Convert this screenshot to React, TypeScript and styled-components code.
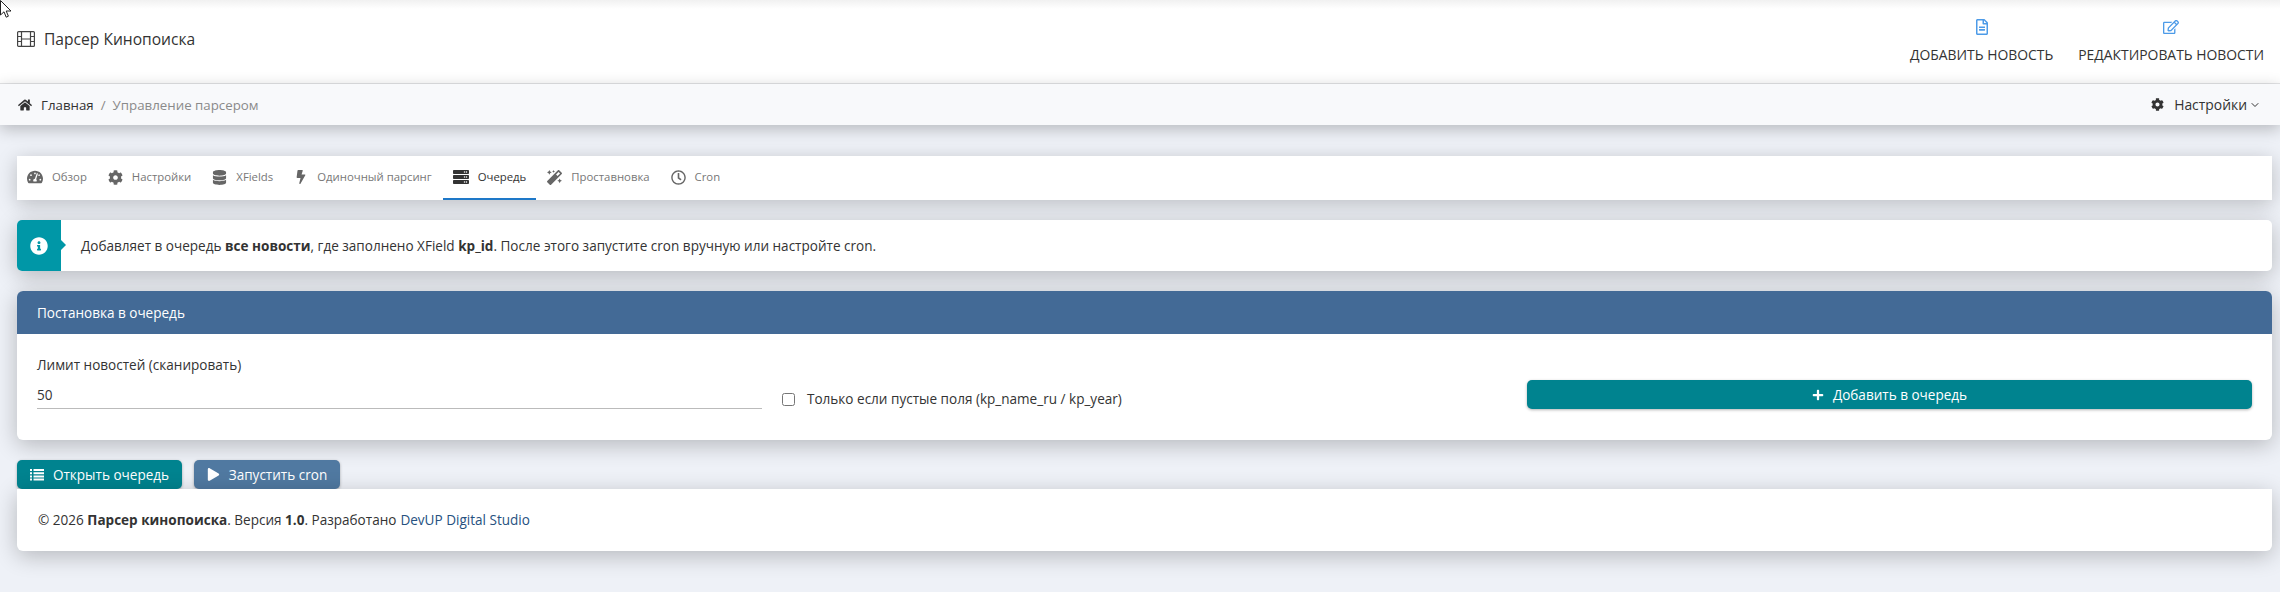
import React from "react";
import styled, { createGlobalStyle } from "styled-components";
import {
  FaBolt,
  FaCog,
  FaDatabase,
  FaHome,
  FaInfoCircle,
  FaMagic,
  FaPlay,
  FaPlus,
  FaRegClock,
  FaRegEdit,
  FaRegFileAlt,
  FaServer,
  FaTachometerAlt,
} from "react-icons/fa";
import { ChevronDown } from "lucide-react";

const GlobalStyle = createGlobalStyle`
  html, body {
    margin: 0;
    padding: 0;
    background: #eef1f7;
  }
  body {
    font-family: "Open Sans", "Noto Sans", "Liberation Sans", sans-serif;
    font-size: 13.55px;
    line-height: 20px;
    color: #333;
  }
`;

const Page = styled.div`
  position: relative;
  height: 592px;
  overflow: hidden;
  background: #eef1f7;
`;

const Cursor = styled.svg`
  position: absolute;
  left: 0;
  top: 0;
`;

const TopBar = styled.header`
  height: 83px;
  display: flex;
  justify-content: space-between;
  background: linear-gradient(#f1f1f1 0, #ffffff 9px);
  border-bottom: 1px solid #e4e5e7;
  padding: 0 16px 0 17px;
`;

const Brand = styled.div`
  display: flex;
  align-items: center;
  gap: 9px;
  height: 78px;
  font-size: 15.6px;
  color: #333;
`;

const TopLinks = styled.nav`
  display: flex;
  gap: 25px;
`;

const TopLink = styled.a`
  display: flex;
  flex-direction: column;
  align-items: center;
  padding-top: 19px;
  gap: 10px;
  font-size: 13.9px;
  line-height: 20px;
  text-transform: uppercase;
  color: #333;
  svg {
    color: #4d9be8;
  }
`;

const Crumbs = styled.div`
  height: 41px;
  display: flex;
  align-items: center;
  justify-content: space-between;
  padding: 0 19px 0 18px;
  background: #f8f9fb;
  box-shadow: 0 4px 16px rgba(0, 0, 0, 0.24);
  position: relative;
`;

const CrumbTrail = styled.div`
  display: flex;
  align-items: center;
  gap: 7px;
  font-size: 13.3px;
  svg {
    margin-right: 2px;
  }
`;

const Muted = styled.span`
  color: #8a8a8a;
`;

const SettingsToggle = styled.div`
  display: flex;
  align-items: center;
  font-size: 13.9px;
  gap: 10px;
  svg:last-child {
    margin-left: -8px;
  }
`;

const Content = styled.main`
  display: flex;
  flex-direction: column;
  padding: 31px 8px 0 17px;
`;

const Tabs = styled.div`
  display: flex;
  gap: 1px;
  height: 44px;
  background: #fff;
  box-shadow: 0 4px 20px rgba(0, 0, 0, 0.22);
`;

const Tab = styled.a<{ $active?: boolean }>`
  display: flex;
  align-items: center;
  gap: 9px;
  padding: 0 10px;
  font-size: 11.35px;
  color: ${(p) => (p.$active ? "#333" : "#777")};
  border-bottom: 2px solid ${(p) => (p.$active ? "#1e78c8" : "transparent")};
  svg {
    color: ${(p) => (p.$active ? "#333" : "#666")};
  }
`;

const Alert = styled.div`
  margin-top: 20px;
  height: 51px;
  display: flex;
  align-items: center;
  background: #fff;
  border-radius: 5px;
  box-shadow: 0 5px 22px rgba(0, 0, 0, 0.24);
`;

const AlertIcon = styled.div`
  position: relative;
  width: 44px;
  height: 100%;
  flex: none;
  display: flex;
  align-items: center;
  justify-content: center;
  border-radius: 5px 0 0 5px;
  background: #0097a7;
  color: #fff;
  &::after {
    content: "";
    position: absolute;
    right: -5px;
    top: 20px;
    border-left: 5px solid #0097a7;
    border-top: 5px solid transparent;
    border-bottom: 5px solid transparent;
  }
`;

const AlertText = styled.div`
  padding-left: 20px;
`;

const Panel = styled.section`
  margin-top: 20px;
  background: #fff;
  border-radius: 6px;
  box-shadow: 0 5px 22px rgba(0, 0, 0, 0.24);
  overflow: hidden;
`;

const PanelHead = styled.div`
  height: 43px;
  display: flex;
  align-items: center;
  padding: 0 20px;
  background: #436a96;
  color: #fff;
`;

const PanelBody = styled.div`
  display: grid;
  grid-template-columns: repeat(3, 1fr);
  gap: 20px;
  align-items: end;
  padding: 21px 20px 31px;
`;

const Field = styled.div`
  display: flex;
  flex-direction: column;
`;

const FieldLabel = styled.label`
  display: block;
`;

const Input = styled.input`
  height: 27px;
  padding: 6px 0 0;
  border: 0;
  border-bottom: 1px solid #bbb;
  outline: none;
  font: inherit;
  color: #333;
  background: transparent;
`;

const CheckRow = styled.label`
  display: flex;
  align-items: center;
  gap: 12px;
  height: 20px;
`;

const Box = styled.input`
  width: 13px;
  height: 13px;
  margin: 0;
`;

const Button = styled.button<{ $bg?: string; $width: string }>`
  display: inline-flex;
  align-items: center;
  justify-content: center;
  gap: 9px;
  height: 29px;
  padding: 0;
  border: 0;
  border-radius: 5px;
  background: ${(p) => p.$bg || "#00838f"};
  color: #fff;
  font: inherit;
  width: ${(p) => p.$width};
  box-shadow: 0 1px 3px rgba(0, 0, 0, 0.3);
`;

const Actions = styled.div`
  margin-top: 20px;
  display: flex;
  gap: 12px;
`;

const Footer = styled.footer`
  height: 62px;
  display: flex;
  align-items: center;
  padding-left: 21px;
  background: #fff;
  border-radius: 0 0 6px 6px;
  box-shadow: 0 5px 22px rgba(0, 0, 0, 0.24);
`;

const FooterLink = styled.a`
  color: #26517f;
  margin-left: 4px;
`;

const FilmIcon = () => (
  <svg width="18" height="16" viewBox="0 0 18 16" fill="none" stroke="#444" strokeWidth="1.2">
    <rect x="0.6" y="0.6" width="16.8" height="14.8" rx="1" />
    <path d="M4.5 0.6v14.8M13.5 0.6v14.8M0.6 5.5h3.9M0.6 10.5h3.9M13.5 5.5h3.9M13.5 10.5h3.9M4.5 8h9" />
  </svg>
);

const ListIcon = () => (
  <svg width="14" height="12" viewBox="0 0 14 12" fill="#fff">
    <path d="M0 0h2v2H0zM3.5 0H14v2H3.5zM0 3.2h2v2H0zM3.5 3.2H14v2H3.5zM0 6.4h2v2H0zM3.5 6.4H14v2H3.5zM0 9.6h2v2H0zM3.5 9.6H14v2H3.5z" />
  </svg>
);

const tabs = [
  { label: "Обзор", icon: <FaTachometerAlt size={16} /> },
  { label: "Настройки", icon: <FaCog size={15} /> },
  { label: "XFields", icon: <FaDatabase size={15} /> },
  { label: "Одиночный парсинг", icon: <FaBolt size={14} /> },
  { label: "Очередь", icon: <FaServer size={16} />, active: true },
  { label: "Проставновка", icon: <FaMagic size={15} /> },
  { label: "Cron", icon: <FaRegClock size={15} /> },
];

const App: React.FC = () => {
  return (
    <Page>
      <GlobalStyle />
      <TopBar>
        <Brand>
          <FilmIcon />
          Парсер Кинопоиска
        </Brand>
        <TopLinks>
          <TopLink>
            <FaRegFileAlt size={16} />
            Добавить новость
          </TopLink>
          <TopLink>
            <FaRegEdit size={16} />
            Редактировать новости
          </TopLink>
        </TopLinks>
      </TopBar>
      <Crumbs>
        <CrumbTrail>
          <FaHome size={14} />
          <span>Главная</span>
          <Muted>/</Muted>
          <Muted>Управление парсером</Muted>
        </CrumbTrail>
        <SettingsToggle>
          <FaCog size={13} />
          <span>Настройки</span>
          <ChevronDown size={12} strokeWidth={2} />
        </SettingsToggle>
      </Crumbs>
      <Content>
        <Tabs>
          {tabs.map((t) => (
            <Tab key={t.label} $active={t.active}>
              {t.icon}
              {t.label}
            </Tab>
          ))}
        </Tabs>
        <Alert>
          <AlertIcon>
            <FaInfoCircle size={18} />
          </AlertIcon>
          <AlertText>
            Добавляет в очередь <b>все новости</b>, где заполнено XField <b>kp_id</b>. После этого
            запустите cron вручную или настройте cron.
          </AlertText>
        </Alert>
        <Panel>
          <PanelHead>Постановка в очередь</PanelHead>
          <PanelBody>
            <Field>
              <FieldLabel>Лимит новостей (сканировать)</FieldLabel>
              <Input defaultValue="50" />
            </Field>
            <CheckRow>
              <Box type="checkbox" />
              Только если пустые поля (kp_name_ru / kp_year)
            </CheckRow>
            <Button $width="100%">
              <FaPlus size={12} />
              Добавить в очередь
            </Button>
          </PanelBody>
        </Panel>
        <Actions>
          <Button $width="165px">
            <ListIcon />
            Открыть очередь
          </Button>
          <Button $bg="#5079a1" $width="146px">
            <FaPlay size={13} />
            Запустить cron
          </Button>
        </Actions>
        <Footer>
          <span>
            © 2026 <b>Парсер кинопоиска</b>. Версия <b>1.0</b>. Разработано
          </span>
          <FooterLink>DevUP Digital Studio</FooterLink>
        </Footer>
      </Content>
      <Cursor width="12" height="19" viewBox="0 0 12 19">
        <path d="M0.5 0.5V15L4 11.8l2.2 5.4 2.2-1L6.2 11h4.8z" fill="#fff" stroke="#222" strokeWidth="1" />
      </Cursor>
    </Page>
  );
};

export default App;
